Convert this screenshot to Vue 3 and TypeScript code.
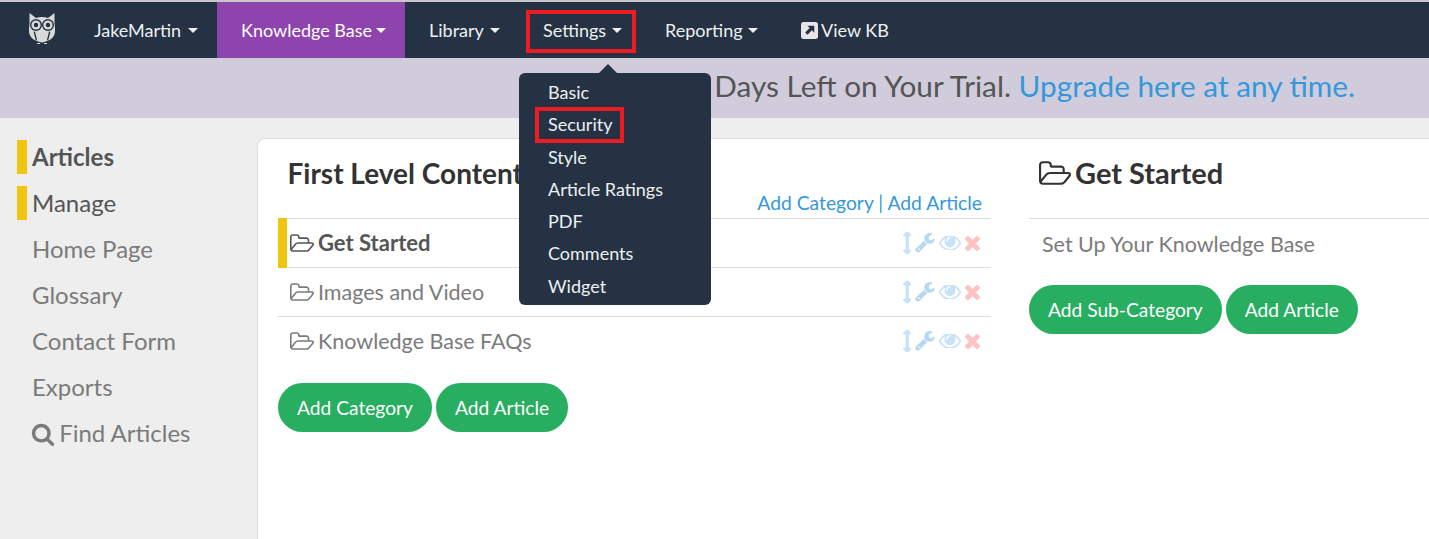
<script setup lang="ts">
const navItems = [
  { label: 'JakeMartin', active: false, width: 147 },
  { label: 'Knowledge Base', active: true, width: 188 },
  { label: 'Library', active: false, width: 114 },
  { label: 'Settings', active: false, width: 122 },
  { label: 'Reporting', active: false, width: 136 },
]
const menu = ['Basic', 'Security', 'Style', 'Article Ratings', 'PDF', 'Comments', 'Widget']
const side = [
  { label: 'Articles', mark: true, bold: true },
  { label: 'Manage', mark: true, bold: false },
  { label: 'Home Page', mark: false, bold: false },
  { label: 'Glossary', mark: false, bold: false },
  { label: 'Contact Form', mark: false, bold: false },
  { label: 'Exports', mark: false, bold: false },
]
const rows = [
  { label: 'Get Started', active: true },
  { label: 'Images and Video', active: false },
  { label: 'Knowledge Base FAQs', active: false },
]
const folderPath =
  'M1845 931q0-35-53-35h-1088q-40 0-85.5 21.5t-71.5 52.5l-294 363q-18 24-18 40 0 35 53 35h1088q40 0 86-22t71-53l294-363q18-22 18-39zm-1141-163h768v-160q0-40-28-68t-68-28h-576q-40 0-68-28t-28-68v-64q0-40-28-68t-68-28h-320q-40 0-68 28t-28 68v853l256-315q44-53 116-87.5t140-34.5zm1269 163q0 62-46 120l-295 363q-43 53-116 87.5t-140 34.5h-1088q-92 0-158-66t-66-158v-960q0-92 66-158t158-66h320q92 0 158 66t66 158v32h544q92 0 158 66t66 158v160h192q54 0 99 24.5t67 70.5q15 32 15 68z'
</script>

<template>
  <div class="page">
    <nav class="nav">
      <div class="logo">
        <svg width="26" height="32" viewBox="0 0 26 32">
          <path
            fill="#d9d9d9"
            d="M0.5 0L7 5Q13 3 19 5L25.5 0V10Q26 13 26 18Q26 27 13 29.5Q0 27 0 18Q0 13 .5 10Z"
          />
          <circle cx="7" cy="12" r="6" fill="#253243" />
          <circle cx="19" cy="12" r="6" fill="#253243" />
          <circle cx="7" cy="12" r="4.6" fill="#d9d9d9" />
          <circle cx="19" cy="12" r="4.6" fill="#d9d9d9" />
          <circle cx="7" cy="12" r="2.2" fill="#253243" />
          <circle cx="19" cy="12" r="2.2" fill="#253243" />
          <path fill="#253243" d="M6 18.5l2.2 9-1.6-.8-2-8zM20 18.5l-2.2 9 1.6-.8 2-8z" />
          <path stroke="#d9d9d9" stroke-width="1" d="M8 30.5h3M15 30.5h3" />
        </svg>
      </div>
      <a
        v-for="item in navItems"
        :key="item.label"
        class="nav-item"
        :class="{ active: item.active }"
        :style="{ width: item.width + 'px' }"
      >
        {{ item.label }}<span class="caret"></span>
      </a>
      <a class="nav-item view">
        <svg class="ext" width="17" height="17" viewBox="0 0 16 16">
          <rect width="16" height="16" rx="2.5" fill="#e6e6e6" />
          <path fill="#253243" d="M6 3.5h6.5V10l-2.2-2.2-4.2 4.3-2.2-2.2 4.3-4.2z" />
        </svg>
        View KB
      </a>
    </nav>

    <div class="banner">
      Days Left on Your Trial. <a class="upgrade">Upgrade here at any time.</a>
    </div>

    <div class="body">
      <aside class="side">
        <a v-for="item in side" :key="item.label" class="side-item" :class="{ mark: item.mark, bold: item.bold }">
          {{ item.label }}
        </a>
        <a class="side-item">
          <svg class="search" width="24" height="24" viewBox="0 0 1792 1792">
            <path
              fill="currentColor"
              d="M1216 832q0-185-131.5-316.5t-316.5-131.5-316.5 131.5-131.5 316.5 131.5 316.5 316.5 131.5 316.5-131.5 131.5-316.5zm512 832q0 52-38 90t-90 38q-54 0-90-38l-343-342q-179 124-399 124-143 0-273.5-55.5t-225-150-150-225-55.5-273.5 55.5-273.5 150-225 225-150 273.5-55.5 273.5 55.5 225 150 150 225 55.5 273.5q0 220-124 399l343 343q37 37 37 90z"
            />
          </svg>
          Find Articles
        </a>
      </aside>

      <main class="card">
        <section class="left">
          <h2 class="title">First Level Content</h2>
          <div class="links"><a>Add Category</a> | <a>Add Article</a></div>
          <div v-for="row in rows" :key="row.label" class="row" :class="{ active: row.active }">
            <svg class="folder" width="24" height="18" viewBox="64 128 1909 1408">
              <path fill="currentColor" :d="folderPath" />
            </svg>
            <span class="row-label">{{ row.label }}</span>
            <span class="tools">
              <svg class="move" width="8.5" height="22" viewBox="576 64 640 1664">
                <path
                  d="M1216 320q0 26-19 45t-45 19h-128v1024h128q26 0 45 19t19 45-19 45l-256 256q-19 19-45 19t-45-19l-256-256q-19-19-19-45t19-45 45-19h128v-1024h-128q-26 0-45-19t-19-45 19-45l256-256q19-19 45-19t45 19l256 256q19 19 19 45z"
                />
              </svg>
              <svg class="wrench" width="20" height="20" viewBox="64 128 1664 1664">
                <path
                  d="M448 1472q0-26-19-45t-45-19-45 19-19 45 19 45 45 19 45-19 19-45zm644-420l-682 682q-37 37-90 37-52 0-91-37l-106-108q-38-36-38-90 0-53 38-91l681-681q39 98 114.5 173.5t173.5 114.5zm634-435q0 39-23 106-47 134-164.5 217.5t-258.5 83.5q-185 0-316.5-131.5t-131.5-316.5 131.5-316.5 316.5-131.5q58 0 121.5 16.5t107.5 46.5q16 11 16 28t-16 28l-293 169v224l193 107q5-3 79-48.5t135.5-81 70.5-35.5q15 0 23.5 10t8.5 25z"
                />
              </svg>
              <svg class="eye" width="22" height="14" viewBox="0 448 1792 1024" preserveAspectRatio="none">
                <path
                  d="M1664 960q-152-236-381-353 61 104 61 225 0 185-131.5 316.5t-316.5 131.5-316.5-131.5-131.5-316.5q0-121 61-225-229 117-381 353 133 205 333.5 326.5t434.5 121.5 434.5-121.5 333.5-326.5zm-720-384q0-20-14-34t-34-14q-125 0-214.5 89.5t-89.5 214.5q0 20 14 34t34 14 34-14 14-34q0-86 61-147t147-61q20 0 34-14t14-34zm848 384q0 34-20 69-140 230-376.5 368.5t-499.5 138.5-499.5-139-376.5-368q-20-35-20-69t20-69q140-229 376.5-368t499.5-139 499.5 139 376.5 368q20 35 20 69z"
                />
              </svg>
              <svg class="del" width="15" height="15" viewBox="302 366 1188 1188">
                <path
                  d="M1490 1322q0 40-28 68l-136 136q-28 28-68 28t-68-28l-294-294-294 294q-28 28-68 28t-68-28l-136-136q-28-28-28-68t28-68l294-294-294-294q-28-28-28-68t28-68l136-136q28-28 68-28t68 28l294 294 294-294q28-28 68-28t68 28l136 136q28 28 28 68t-28 68l-294 294 294 294q28 28 28 68z"
                />
              </svg>
            </span>
          </div>
          <div class="buttons">
            <button class="btn">Add Category</button>
            <button class="btn">Add Article</button>
          </div>
        </section>

        <section class="right">
          <h2 class="title with-icon">
            <svg width="32" height="24" viewBox="64 128 1909 1408">
              <path fill="currentColor" :d="folderPath" />
            </svg>
            Get Started
          </h2>
          <div class="detail">Set Up Your Knowledge Base</div>
          <div class="buttons small-gap">
            <button class="btn">Add Sub-Category</button>
            <button class="btn">Add Article</button>
          </div>
        </section>
      </main>
    </div>

    <!-- dropdown + annotation boxes sit over the page -->
    <div class="dropdown">
      <a v-for="m in menu" :key="m" class="drop-item">{{ m }}</a>
    </div>
    <div class="callout settings-box"></div>
    <div class="callout security-box"></div>
  </div>
</template>

<style>
html,
body {
  margin: 0;
  overflow: hidden;
  background: #eee;
}
</style>

<style scoped>
.page {
  position: relative;
  height: 539px;
  overflow: hidden;
  font-family: Lato, 'Open Sans', sans-serif;
  background: #eee;
  color: #777;
}

.nav {
  display: flex;
  height: 56px;
  background: #253243;
  border-top: 2px solid #c8c8c8;
}

.logo {
  width: 70px;
  flex: none;
  box-sizing: border-box;
  padding: 11px 0 0 29px;
}

.nav-item {
  display: flex;
  align-items: center;
  box-sizing: border-box;
  flex: none;
  padding-left: 24px;
  font-size: 18px;
  color: #ecf0f1;
  white-space: nowrap;
}

.nav-item.active {
  background: #8e44ad;
  color: #fff;
}

.caret {
  width: 0;
  height: 0;
  margin-left: auto;
  margin-right: 19px;
  border-left: 5px solid transparent;
  border-right: 5px solid transparent;
  border-top: 5px solid currentColor;
}

.ext {
  margin-right: 3px;
}

.banner {
  height: 60px;
  box-sizing: border-box;
  padding-right: 74px;
  background: #d0ccdb;
  text-align: right;
  font-size: 29.75px;
  line-height: 56px;
  color: #555;
}

.upgrade {
  color: #3498db;
}

.body {
  display: flex;
  padding-top: 20px;
}

.side {
  width: 257px;
  flex: none;
  display: flex;
  flex-direction: column;
  gap: 12px;
  padding-top: 2px;
  box-sizing: border-box;
}

.side-item {
  position: relative;
  height: 34px;
  line-height: 34px;
  padding-left: 32px;
  font-size: 24px;
  color: #7b7b7b;
}

.side-item.mark {
  color: #555;
}

.side-item.mark::before {
  content: '';
  position: absolute;
  left: 17px;
  top: 0;
  width: 10px;
  height: 34px;
  background: #f1c40f;
}

.side-item.bold {
  font-weight: 700;
}

.search {
  vertical-align: -4px;
  margin: 0 -2px 0 -1px;
}

.card {
  flex: 1;
  height: 401px;
  box-sizing: border-box;
  display: flex;
  background: #fff;
  border-left: 1px solid #ddd;
  border-top: 1px solid #ddd;
  border-top-left-radius: 8px;
  padding-left: 20px;
}

.left {
  width: 713px;
  flex: none;
  margin-right: 38px;
}

.right {
  flex: 1;
}

.title {
  margin: 0;
  height: 38px;
  padding: 14px 0 0 10px;
  font-size: 28px;
  line-height: 40px;
  font-weight: 700;
  color: #333;
  white-space: nowrap;
}

.left .title {
  padding-left: 9.5px;
}

.with-icon {
  display: flex;
  align-items: center;
  gap: 4px;
  height: 40px;
  padding: 14px 0 25px 10px;
  border-bottom: 1px solid #ddd;
  font-size: 29px;
}

.links {
  height: 27px;
  line-height: 24px;
  padding-right: 9px;
  text-align: right;
  font-size: 19.3px;
  color: #3498db;
}

.row {
  display: flex;
  align-items: center;
  height: 48px;
  border-top: 1px solid #ddd;
  padding-left: 12px;
  font-size: 21.5px;
  color: #7b7b7b;
}

.row.active {
  position: relative;
  color: #555;
  font-weight: 700;
  font-size: 22px;
}

.row.active .row-label {
  margin-top: -2px;
}

.row.active::before {
  content: '';
  position: absolute;
  left: 0;
  top: -1px;
  width: 9px;
  height: 50px;
  background: #f1c40f;
}

.folder {
  margin-right: 4px;
}

.tools {
  margin-left: auto;
  display: flex;
  align-items: center;
  gap: 4px;
  margin-right: 11px;
}

.move {
  fill: #c9e2f5;
}

.wrench {
  fill: #b6d8f2;
}

.eye {
  fill: #c9e2f5;
}

.del {
  fill: #ffc2c2;
}

.buttons {
  display: flex;
  gap: 4px;
  margin-top: 18px;
}

.btn {
  height: 49px;
  padding: 0 19px;
  border: 0;
  border-radius: 25px;
  background: #27ae60;
  color: #fff;
  font-family: inherit;
  font-size: 19.2px;
}

.detail {
  height: 50px;
  line-height: 50px;
  padding-left: 13px;
  font-size: 21.5px;
  color: #7b7b7b;
}

.small-gap {
  margin-top: 16px;
}

.dropdown {
  position: absolute;
  left: 519px;
  top: 73px;
  width: 192px;
  height: 232px;
  box-sizing: border-box;
  padding-top: 3px;
  background: #253243;
  border-radius: 6px;
  display: flex;
  flex-direction: column;
}

.dropdown::before {
  content: '';
  position: absolute;
  top: -9px;
  left: 80px;
  border-left: 9px solid transparent;
  border-right: 9px solid transparent;
  border-bottom: 9px solid #253243;
}

.drop-item {
  height: 32.3px;
  line-height: 32.9px;
  padding-left: 29px;
  font-size: 18px;
  color: #ecf0f1;
}

.callout {
  position: absolute;
  box-sizing: border-box;
  border: 4px solid #ed1c24;
  pointer-events: none;
}

.settings-box {
  left: 526px;
  top: 10px;
  width: 110px;
  height: 43px;
}

.security-box {
  left: 535px;
  top: 107px;
  width: 89px;
  height: 36px;
}
</style>
